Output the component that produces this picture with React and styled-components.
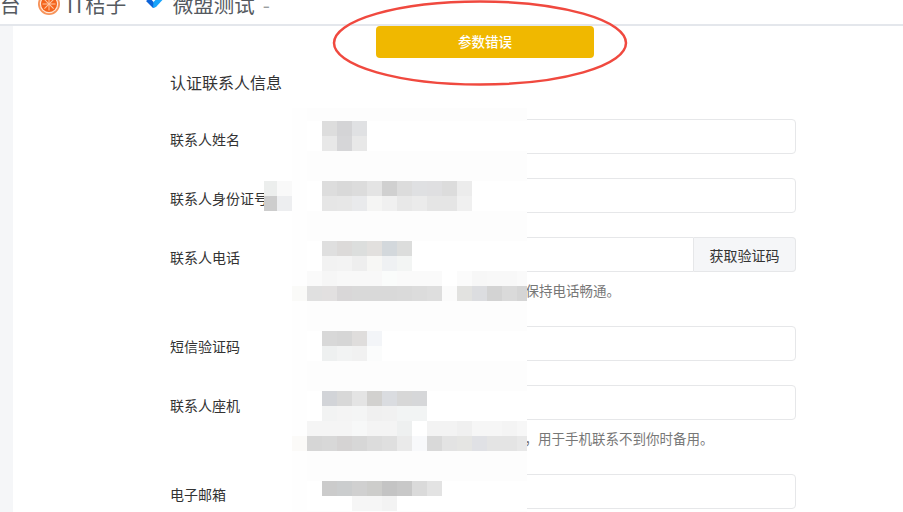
import React from 'react';
import styled, { createGlobalStyle } from 'styled-components';

const Global = createGlobalStyle`
  html, body { margin: 0; padding: 0; background: #fff; }
  body { font-family: "Noto Sans CJK SC", "Liberation Sans", sans-serif; }
`;

const Page = styled.div`
  position: relative;
  width: 903px;
  height: 512px;
  overflow: hidden;
  background: #fff;
`;

const TopBar = styled.header`
  box-sizing: border-box;
  height: 26px;
  border-bottom: 2px solid #e4e7ec;
  overflow: hidden;
  position: relative;
`;

const TopNav = styled.nav`
  display: flex;
  align-items: center;
  height: 28px;
  margin-top: -10px;
  color: #555a60;
  font-size: 20.5px;
  line-height: 28px;
  white-space: nowrap;
`;

const NavItem = styled.span`
  display: inline-flex;
  align-items: center;
  gap: ${p => p.$gap || 6}px;
  margin-left: ${p => p.$ml || 0}px;
`;

const NavDash = styled(NavItem)`
  color: #9a9da1;
`;

const Body = styled.div`
  display: flex;
  height: 486px;
`;

const Sidebar = styled.aside`
  width: 13px;
  flex: none;
  background: #f5f6f8;
`;

const Main = styled.main`
  flex: 1;
  padding: 0 0 0 157px;
  width: 626px;
`;

const Form = styled.form`
  width: 626px;
`;

const Title = styled.h2`
  margin: 0 0 25px;
  padding-top: 44px;
  height: 24px;
  line-height: 24px;
  font-size: 16px;
  font-weight: 400;
  color: #333;
`;

const Row = styled.div`
  display: grid;
  grid-template-columns: 125px 501px;
  margin-bottom: ${p => p.$mb ?? 24}px;
`;

const Label = styled.label`
  font-size: 14px;
  line-height: 20px;
  padding-top: 10px;
  color: #333;
  white-space: nowrap;
`;

const Control = styled.div`
  display: flex;
`;

const Input = styled.input`
  box-sizing: border-box;
  flex: 1;
  min-width: 0;
  height: 35px;
  padding: 0 12px;
  border: 1px solid #e6e7e9;
  border-radius: ${p => (p.$joined ? '4px 0 0 4px' : '4px')};
  background: #fff;
  outline: none;
`;

const Addon = styled.button`
  box-sizing: border-box;
  flex: none;
  width: 102px;
  height: 35px;
  padding: 0;
  border: 1px solid #e6e7e9;
  border-left: 0;
  border-radius: 0 4px 4px 0;
  background: #f5f6f8;
  color: #333;
  font: inherit;
  font-size: 14px;
`;

const Help = styled.p`
  grid-column: 2;
  margin: 8px 0 0;
  height: 20px;
  line-height: 20px;
  font-size: 13.5px;
  color: #777;
  white-space: nowrap;
  text-indent: ${p => p.$indent}px;
`;

const Toast = styled.div`
  position: absolute;
  left: 376px;
  top: 26px;
  width: 218px;
  height: 32px;
  border-radius: 4px;
  background: #f0b800;
  color: #fff;
  font-size: 13.5px;
  font-weight: 500;
  line-height: 31px;
  text-align: center;
`;

const Annotation = styled.svg`
  position: absolute;
  left: 330px;
  top: 0;
  pointer-events: none;
`;

const Mosaic = styled.div`
  position: absolute;
  left: 292px;
  top: 108px;
  width: 235px;
  height: 404px;
  overflow: hidden;
  display: grid;
  grid-template-columns: repeat(16, 15px);
  grid-template-rows: 13px;
  grid-auto-rows: 15px;
`;

const Cell = styled.i`
  display: block;
  background: ${p => p.$c};
`;

const LabelMosaic = styled.div`
  position: absolute;
  left: 264px;
  top: 181px;
  display: grid;
  grid-template-columns: 13px 15px;
  grid-auto-rows: 15px;
`;

/* sparse pixelated cells: row -> [first column, colours...] */
const cells = {
  1: [2, '#dddddd', '#d4d4d6', '#e0e1e3'],
  2: [2, '#e8e8e8', '#d6d6d8', '#e8e8e8'],
  5: [2, '#dddddd', '#d9d9d9', '#dcdcdc', '#e4e4e4', '#d0d0d0', '#dcdcdc', '#dfe0e2', '#dfdfe1', '#dcdcdc', '#ececec'],
  6: [2, '#e6e6e6', '#e7e7e7', '#e9eaec', '#f5f5f4', '#f0f0f0', '#e8e8e8', '#ebebeb', '#e5e5e5', '#e5e5e5', '#f0f0f0'],
  9: [2, '#dfdfdf', '#dcdad9', '#dcdedd', '#e2e0de', '#d3d8dc', '#dcdddc'],
  10: [2, '#f2f2f2', '#f3f3f3', '#eeeeee', '#f7f7f5', '#eff1f3', '#f3f5f4'],
  11: [1, '#fafafa', '#f6f6f6', '#f8f8f8', '#f8f8f8', '#f8f8f8', '#fafcfb', '#fafafa', '#fafafa', '#fafafa', '#ffffff', '#fbfbfb', '#f7f7f7', '#f8f8f8', '#f8f8f8', '#fafafa'],
  12: [0, '#fafaf8', '#e0e0e0', '#e2e0e0', '#d9d7d8', '#d9d9d9', '#d9d9d9', '#d9d9d9', '#dadada', '#dcdcdc', '#dedede', '#fbfbfb', '#e2e2e0', '#dcdde0', '#d3d3d3', '#dadada', '#d5d5d5'],
  15: [2, '#d8d8d8', '#d6d6d6', '#dfdddc', '#f3f5f8'],
  16: [2, '#eef0f0', '#f2f3f3', '#f1f1f1', '#fbfcfc'],
  19: [2, '#d2d4d8', '#d8d8d8', '#e4e4e4', '#d2d1cf', '#dadce0', '#d7d7d7', '#d6d7d9'],
  20: [2, '#f2f3f3', '#f4f4f4', '#f4f5f5', '#f0f0f0', '#f1f1f1', '#f2f4f4', '#f2f4f4'],
  21: [1, '#f5f5f5', '#f5f5f5', '#f5f5f5', '#f7f8f8', '#f4f4f4', '#f4f4f4', '#eef0f0', '#ffffff', '#f3f3f3', '#f3f3f3', '#f0f0f0', '#f6f6f6', '#f6f6f6', '#f4f4f4', '#f7f7f7'],
  22: [0, '#fbfaf8', '#d6d6d6', '#d8d8d8', '#d5d3d3', '#d7d7d7', '#dcdcdc', '#dfdfdf', '#eaeaea', '#f8f9fb', '#d9d9d9', '#e3e3e3', '#e5e5e3', '#e0e1e5', '#e4e4e4', '#e4e4e4', '#e8e8e8'],
  25: [2, '#cbcbcb', '#cbcdce', '#d0d0d0', '#cdcdcb', '#c4c4c4', '#c8c8c8', '#dadada', '#e3e3e3'],
  26: [4, '#f6f6f6', '#f6f6f6', '#f3f3f3'],
};

const mosaicCells = [];
for (let r = 0; r < 28; r++) {
  for (let c = 0; c < 16; c++) {
    const def = cells[r];
    const fresh = def && c >= def[0] && c - def[0] + 1 < def.length;
    const base = c < 1 ? '#fefefe' : def ? '#fff' : '#fdfdfd';
    mosaicCells.push(fresh ? def[c - def[0] + 1] : base);
  }
}

const Orange = () => (
  <svg width="22" height="22" viewBox="0 0 22 22">
    <circle cx="11" cy="11" r="11" fill="#f7935a" />
    <circle cx="11" cy="11" r="9.2" fill="#ffe6d6" />
    <circle cx="11" cy="11" r="8" fill="#f4641c" />
    {[0, 45, 90, 135].map(a => (
      <line key={a} x1="11" y1="4.5" x2="11" y2="17.5" stroke="#ffc8a4" strokeWidth="1" transform={`rotate(${a} 11 11)`} />
    ))}
  </svg>
);

const Check = () => (
  <svg width="22" height="14" viewBox="0 0 22 14">
    <path d="M1 4 L5 1 L8.5 5 L11 9.5 L8 11 Z" fill="#0c63d8" />
    <path d="M8.5 5 L15 -2 L22 -2 L11 10 L8 11 Z" fill="#19a4fb" />
  </svg>
);

export default function App() {
  return (
    <Page>
      <Global />
      <TopBar>
        <TopNav>
          <NavItem>台</NavItem>
          <NavItem $ml={17.5} $gap={7}><Orange />IT桔子</NavItem>
          <NavItem $ml={18.5} $gap={6}><Check />微盟测试</NavItem>
          <NavDash $ml={8}>-</NavDash>
        </TopNav>
      </TopBar>
      <Body>
        <Sidebar />
        <Main>
          <Form>
            <Title>认证联系人信息</Title>
            <Row>
              <Label>联系人姓名</Label>
              <Control><Input /></Control>
            </Row>
            <Row>
              <Label>联系人身份证号</Label>
              <Control><Input /></Control>
            </Row>
            <Row $mb={26}>
              <Label>联系人电话</Label>
              <Control><Input $joined /><Addon type="button">获取验证码</Addon></Control>
              <Help $indent={230.5}>保持电话畅通。</Help>
            </Row>
            <Row>
              <Label>短信验证码</Label>
              <Control><Input /></Control>
            </Row>
            <Row $mb={26}>
              <Label>联系人座机</Label>
              <Control><Input /></Control>
              <Help $indent={229.5}>，用于手机联系不到你时备用。</Help>
            </Row>
            <Row>
              <Label>电子邮箱</Label>
              <Control><Input /></Control>
            </Row>
          </Form>
        </Main>
      </Body>
      <Mosaic>
        {mosaicCells.map((c, i) => <Cell key={i} $c={c} />)}
      </Mosaic>
      <LabelMosaic>
        {['#eceeed', '#f9f9f9', '#cdcdcd', '#edeef0'].map(c => <Cell key={c} $c={c} />)}
      </LabelMosaic>
      <Toast>参数错误</Toast>
      <Annotation width="300" height="90" viewBox="0 0 300 90">
        <ellipse cx="150" cy="43" rx="146" ry="41.5" fill="none" stroke="#f0493f" strokeWidth="2.5" />
      </Annotation>
    </Page>
  );
}
